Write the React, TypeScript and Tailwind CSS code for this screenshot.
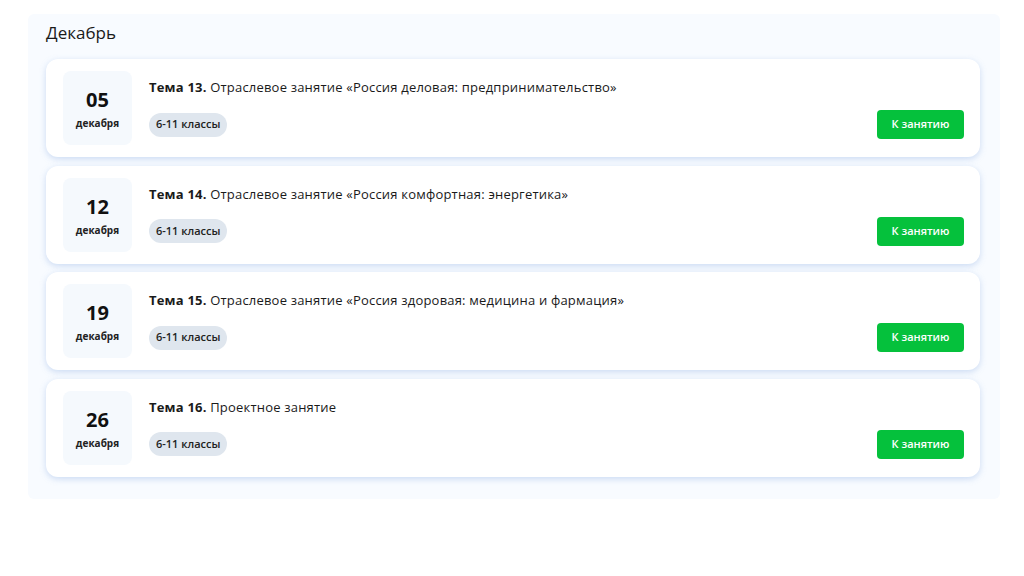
import React from 'react';

type Lesson = {
  day: string;
  topic: string;
  title: string;
  grades: string;
};

const lessons: Lesson[] = [
  { day: '05', topic: 'Тема 13.', title: 'Отраслевое занятие «Россия деловая: предпринимательство»', grades: '6-11 классы' },
  { day: '12', topic: 'Тема 14.', title: 'Отраслевое занятие «Россия комфортная: энергетика»', grades: '6-11 классы' },
  { day: '19', topic: 'Тема 15.', title: 'Отраслевое занятие «Россия здоровая: медицина и фармация»', grades: '6-11 классы' },
  { day: '26', topic: 'Тема 16.', title: 'Проектное занятие', grades: '6-11 классы' },
];

const LessonCard: React.FC<{ lesson: Lesson }> = ({ lesson }) => (
  <div className="flex h-[98px] items-stretch rounded-xl bg-white pl-[17px] pr-4 py-3 shadow-[0_2px_6px_rgba(120,160,220,0.35)]">
    <div className="flex w-[69px] flex-col items-center justify-center rounded-lg bg-[#f5f9fd]">
      <span className="mt-[2px] text-[20px] font-bold leading-none text-[#111]">{lesson.day}</span>
      <span className="mt-[8px] text-[10px] font-bold leading-none text-[#222]">декабря</span>
    </div>
    <div className="ml-[17px] flex flex-1 flex-col pt-[8px]">
      <p className="text-[13px] leading-[16px] tracking-[0.2px] text-[#1a1a1a]">
        <span className="font-bold">{lesson.topic}</span> {lesson.title}
      </p>
      <div className="mt-auto mb-[6px] flex items-center justify-between">
        <span className="flex h-[24px] items-center rounded-full bg-[#dfe6ee] px-[7px] text-[11px] font-semibold text-[#222]">
          {lesson.grades}
        </span>
        <button className="h-[29px] w-[87px] rounded-[4px] bg-[#05c13c] text-[11px] font-semibold text-white">
          К занятию
        </button>
      </div>
    </div>
  </div>
);

export default function App() {
  return (
    <div className="h-[576px] w-[1024px] bg-white pl-[28px] pt-[14px] font-['Open_Sans','Noto_Sans',sans-serif]">
      <div className="w-[972px] rounded-md bg-[#f8fbff] px-[18px] pb-[22px] pt-[9px]">
        <h2 className="mb-[16px] text-[17px] leading-[20px] text-[#1a1a1a]">Декабрь</h2>
        <div className="flex w-[934px] flex-col gap-[8.5px]">
          {lessons.map((l) => (
            <LessonCard key={l.day} lesson={l} />
          ))}
        </div>
      </div>
    </div>
  );
}
